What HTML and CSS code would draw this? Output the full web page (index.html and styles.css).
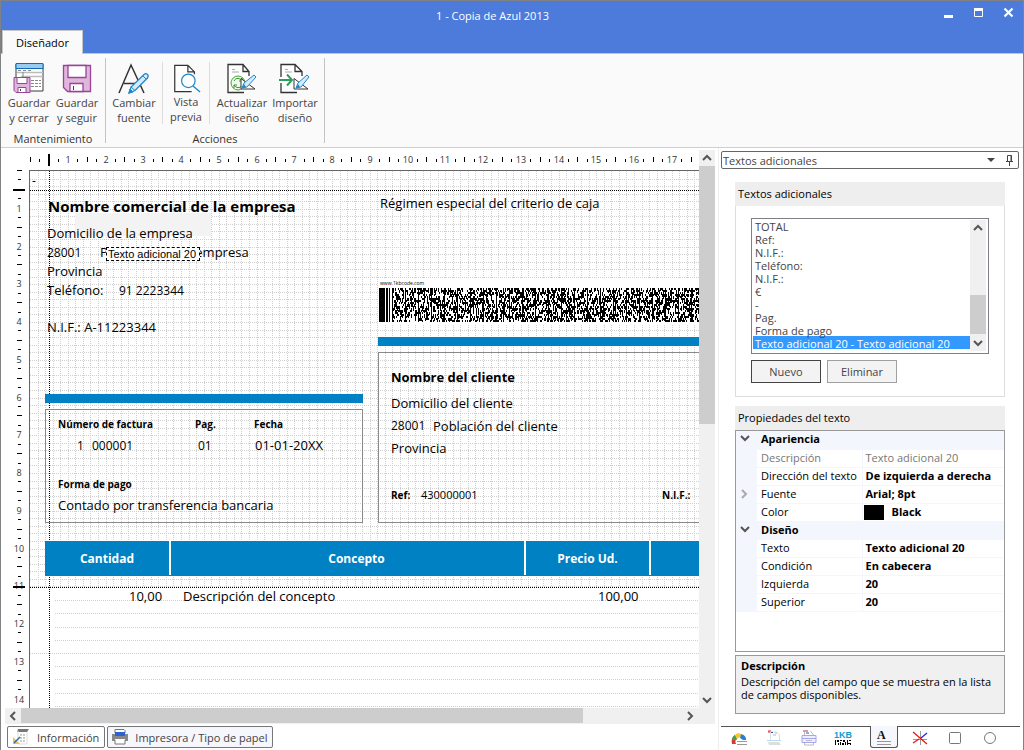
FILE: index.html
```html
<!DOCTYPE html>
<html lang="es">
<head>
<meta charset="utf-8">
<title>1 - Copia de Azul 2013</title>
<link rel="stylesheet" href="styles.css">
</head>
<body>
<div class="window">
  <header class="titlebar">
    <h1 class="title">1 - Copia de Azul 2013</h1>
    <div class="window-buttons">
      <button aria-label="Minimizar"><svg width="11" height="11"><path d="M1 8h9v3H1z" fill="#fff"/></svg></button>
      <button aria-label="Maximizar"><svg width="11" height="11"><path d="M1.500 1.500h8v8h-8z" fill="none" stroke="#fff"/><path d="M1 1h9v3H1z" fill="#fff"/></svg></button>
      <button aria-label="Cerrar"><svg width="11" height="11"><path d="M1.500 1.500l8 8M9.500 1.500l-8 8" stroke="#fff" stroke-width="2.200"/></svg></button>
    </div>
    <button class="ribbon-tab">Diseñador</button>
  </header>

  <nav class="ribbon">
    <section class="ribbon-group save-group">
      <div class="ribbon-tools">
        <button class="tool">
          <svg width="32" height="32" viewBox="0 0 32 32" fill="none"><path d="M3 2h27v27H3z" fill="#fff" stroke="#3b3b3b"/><path d="M3 1.500h27v5H3z" fill="#9ccbf0" stroke="#0f6cb8"/><path d="M4 10.500h26M8 14.500h22" stroke="#bbb" stroke-width="1.500"/><path d="M5 8.500h3m2 0h3m2 0h3M18 18.500h10M18 21.500h10M18 24.500h10" stroke="#888" stroke-dasharray="3 1"/><path d="M10 10v5" stroke="#888"/><path d="M1 15.500h16v15H3l-2-2z" fill="#dfb7dc" stroke="#9a4399"/><path d="M4 15.500h10v6H4z" fill="#fff" stroke="#9a4399"/><path d="M5 25.500h8v5H5z" fill="#fff" stroke="#9a4399"/><path d="M7.500 27v2" stroke="#444"/></svg>
          <span>Guardar<br>y cerrar</span></button>
        <button class="tool">
          <svg width="32" height="32" viewBox="0 0 32 32" fill="none"><path d="M2.500 3.500h27v26H6.500l-4-4z" fill="#dfb7dc" stroke="#9a4399" stroke-width="1.300"/><path d="M7 3.500h18v12H7z" fill="#fff" stroke="#9a4399" stroke-width="1.300"/><path d="M9 21.500h13v8H9z" fill="#fff" stroke="#9a4399" stroke-width="1.300"/><path d="M12.500 24v4" stroke="#444"/></svg>
          <span>Guardar<br>y seguir</span></button>
      </div>
      <h2>Mantenimiento</h2>
    </section>
    <section class="ribbon-group action-group">
      <div class="ribbon-tools">
        <button class="tool">
          <svg width="32" height="32" viewBox="0 0 32 32" fill="none"><path d="M1 31L13 3l13 28M6 21.500h15" stroke="#333" stroke-width="1.500"/><path d="M11 31l2-6L26 12.500c1-1 2.500-1 3.500 0s1 2 0 3.500L17 28.500z" fill="#d7eafa" stroke="#1e88cf" stroke-width="1.300"/><path d="M11 31l4-1-3-3zM13 25l4 3.500M25 14l3 3" stroke="#1e88cf" fill="#1e88cf"/></svg>
          <span>Cambiar<br>fuente</span></button>
        <button class="tool preview">
          <svg width="32" height="32" viewBox="0 0 32 32" fill="none"><path d="M4 2.500h14l7 7v21H4z" fill="#fff"/><path d="M22 30.500H4v-28h14l7 7V12M18 2.500v7h7" stroke="#333" stroke-width="1.300"/><circle cx="18.500" cy="19" r="7.200" fill="#fff" stroke="#1e88cf" stroke-width="1.300"/><path d="M23.500 24.500L31 31" stroke="#1e88cf" stroke-width="1.500"/></svg>
          <span>Vista<br>previa</span></button>
        <button class="tool">
          <svg width="32" height="32" viewBox="0 0 32 32" fill="none"><path d="M2 2.500h15l6 7v21H2z" fill="#fff"/><path d="M23 14V9.500l-6-7H2v28h16M17 2.500v7h6" stroke="#333" stroke-width="1.300"/><path d="M6 7.500h3M6 10h7" stroke="#aaa"/><circle cx="12" cy="21" r="7" fill="#f2faee" stroke="#46a332"/><path d="M8 19c2-4 6-3 8 0m0 4c-2 4-6 3-8 0M16 16v3h-3M8 26v-3h3" stroke="#33952a"/><path d="M15 16.500V27h14z" fill="#fff" stroke="#333"/><path d="M16 26l2-5L28 13l2 2-9 10z" fill="#d7eafa" stroke="#1e88cf"/><path d="M16 26l4-1-2-3z" fill="#1e88cf"/></svg>
          <span>Actualizar<br>diseño</span></button>
        <button class="tool">
          <svg width="32" height="32" viewBox="0 0 32 32" fill="none"><path d="M2 2.500h14l7 7v21H2z" fill="#fff"/><path d="M2 15V2.500h14l7 7V14M16 2.500v7h7M2 21v9.500h16" stroke="#333" stroke-width="1.300"/><path d="M6 7.500h3M6 10h7" stroke="#aaa"/><path d="M0 18h12M8 12.500l5 5.500-5 5.500" stroke="#2f9e5b" stroke-width="2"/><path d="M15 16.500V27h14z" fill="#fff" stroke="#333"/><path d="M17 26l2-5L28 13l2 2-8 10z" fill="#d7eafa" stroke="#1e88cf"/><path d="M17 26l4-1-2-3z" fill="#1e88cf"/></svg>
          <span>Importar<br>diseño</span></button>
      </div>
      <h2>Acciones</h2>
    </section>
  </nav>

  <main class="workspace">
    <section class="editor">
      <svg class="ruler ruler-top" id="ruler-top" aria-hidden="true"></svg>
      <svg class="ruler ruler-left" id="ruler-left" aria-hidden="true"></svg>
      <div class="canvas">
        <svg class="layer" id="grid" aria-hidden="true"></svg>
        <div class="ghost"></div>
        <p class="item dash">-</p>
        <p class="item company">Nombre comercial de la empresa</p>
        <p class="item t13 address">Domicilio de la empresa</p>
        <p class="item zip">28001</p>
        <p class="item t13 town">Población de la empresa</p>
        <p class="item t13 province">Provincia</p>
        <p class="item t13 phone-label">Teléfono:</p>
        <p class="item phone">91 2223344</p>
        <p class="item t13 nif">N.I.F.: A-11223344</p>
        <p class="item t13 regime">Régimen especial del criterio de caja</p>
        <p class="item selected">Texto adicional 20</p>

        <div class="barcode"><small>www.1kbcode.com</small><svg id="barcode" role="img" aria-label="Código 1KB"></svg></div>
        <div class="bar bar-client"></div>
        <div class="bar bar-invoice"></div>
        <div class="box box-invoice"></div>
        <div class="box box-client"></div>

        <p class="item small-bold invoice-label">Número de factura</p>
        <p class="item small-bold page-label">Pag.</p>
        <p class="item small-bold date-label">Fecha</p>
        <p class="item serie">1</p>
        <p class="item invoice">000001</p>
        <p class="item page">01</p>
        <p class="item t13 date">01-01-20XX</p>
        <p class="item small-bold payment-label">Forma de pago</p>
        <p class="item t13 payment">Contado por transferencia bancaria</p>

        <p class="item t13 client">Nombre del cliente</p>
        <p class="item t13 client-address">Domicilio del cliente</p>
        <p class="item client-zip">28001</p>
        <p class="item t13 client-town">Población del cliente</p>
        <p class="item t13 client-province">Provincia</p>
        <p class="item small-bold ref-label">Ref:</p>
        <p class="item ref">430000001</p>
        <p class="item small-bold client-nif">N.I.F.:</p>

        <div class="columns"><span>Cantidad</span><span>Concepto</span><span>Precio Ud.</span><span></span></div>
        <p class="item t13 quantity">10,00</p>
        <p class="item t13 concept">Descripción del concepto</p>
        <p class="item t13 price">100,00</p>
      </div>
      <div class="scroll scroll-v">
        <button aria-label="Subir"><svg width="10" height="10"><path d="M1 7l4-4 4 4" /></svg></button>
        <div class="track"><div class="thumb"></div></div>
        <button aria-label="Bajar"><svg width="10" height="10"><path d="M1 3l4 4 4-4"/></svg></button>
      </div>
      <div class="scroll scroll-h">
        <button aria-label="Izquierda"><svg width="10" height="10"><path d="M7 1L3 5l4 4"/></svg></button>
        <div class="track"><div class="thumb"></div></div>
        <button aria-label="Derecha"><svg width="10" height="10"><path d="M3 1l4 4-4 4"/></svg></button>
      </div>
      <nav class="sheets">
        <button><svg width="18" height="18" fill="none"><path d="M6 1h11l-2 3H5z" fill="#777"/><path d="M6 3v13h9V4" stroke="#ddd"/><path d="M8 7h5M8 10h5M8 13h5" stroke="#999" stroke-dasharray="2 1"/><path d="M1 9l7 7H1z" fill="#f3bd62"/><path d="M2 15l6-6" stroke="#246fae" stroke-width="1.500"/></svg>Información</button>
        <button><svg width="18" height="18" fill="none"><path d="M4 5V1.500h9l1 1V5M4 12v4h10v-4" fill="#fff" stroke="#777"/><path d="M1 6h16v7h-3v-2H4v2H1z" fill="#888"/><path d="M4 4h10v4H4z" fill="#2b62cf"/></svg>Impresora / Tipo de papel</button>
      </nav>
    </section>

    <aside class="dock">
      <header class="dock-title"><h2>Textos adicionales</h2>
        <button aria-label="Opciones"><svg width="9" height="5"><path d="M0 0h8L4 4z" fill="#444"/></svg></button>
        <button aria-label="Fijar"><svg width="9" height="11" fill="none" stroke="#444"><path d="M2.500 6V.5h4V6M6 .5V6M1 6.500h7M4.500 7v4"/></svg></button>
      </header>
      <section class="group">
        <h3 id="texts">Textos adicionales</h3>
        <div class="group-body">
          <div class="listbox">
            <select size="10" aria-labelledby="texts">
              <option>TOTAL</option><option>Ref:</option><option>N.I.F.:</option><option>Teléfono:</option><option>N.I.F.:</option><option>€</option><option>-</option><option>Pag.</option><option>Forma de pago</option><option selected>Texto adicional 20 - Texto adicional 20</option>
            </select>
            <div class="scroll scroll-v">
              <button aria-label="Subir lista"><svg width="10" height="10"><path d="M1 7l4-4 4 4"/></svg></button>
              <div class="track"><div class="thumb"></div></div>
              <button aria-label="Bajar lista"><svg width="10" height="10"><path d="M1 3l4 4 4-4"/></svg></button>
            </div>
          </div>
          <div class="actions"><button class="default">Nuevo</button><button>Eliminar</button></div>
        </div>
      </section>
      <section class="group properties">
        <h3>Propiedades del texto</h3>
        <div class="property-grid">
          <table>
            <colgroup><col class="gutter"><col class="name"><col></colgroup>
            <tr class="category"><td><svg width="10" height="8"><path d="M1 1l4 4 4-4"/></svg></td><th colspan="2">Apariencia</th></tr>
            <tr class="readonly"><td></td><th>Descripción</th><td>Texto adicional 20</td></tr>
            <tr><td></td><th>Dirección del texto</th><td>De izquierda a derecha</td></tr>
            <tr><td><svg class="closed" width="8" height="10"><path d="M2 1l4 4-4 4"/></svg></td><th>Fuente</th><td>Arial; 8pt</td></tr>
            <tr><td></td><th>Color</th><td class="color-cell"><i class="swatch"></i>Black</td></tr>
            <tr class="category"><td><svg width="10" height="8"><path d="M1 1l4 4 4-4"/></svg></td><th colspan="2">Diseño</th></tr>
            <tr><td></td><th>Texto</th><td>Texto adicional 20</td></tr>
            <tr><td></td><th>Condición</th><td>En cabecera</td></tr>
            <tr><td></td><th>Izquierda</th><td>20</td></tr>
            <tr><td></td><th>Superior</th><td>20</td></tr>
          </table>
        </div>
        <div class="help"><strong>Descripción</strong><p>Descripción del campo que se muestra en la lista de campos disponibles.</p></div>
      </section>
      <nav class="dock-tabs">
        <button aria-label="Color"><svg width="16" height="16" fill="none"><path d="M1 14c-1-4 0-7 3-9l2 4c-2 1-2 3-1 5z" fill="#df3438"/><path d="M1 10c0-2 1-4 3-5l2 4-1 1z" fill="#39a84a"/><path d="M4 5c2-2 4-2 6-1L9 8C8 7 7 8 6 9z" fill="#f5c52e"/><path d="M10 4c3 1 5 2 5 6h-3L9 8z" fill="#2d7bd2"/><path d="M6 11.500h10M6 14.500h10" stroke="#999"/></svg></button>
        <button aria-label="Imagen"><svg width="16" height="16" fill="none"><path d="M4.500 2v9M4.500 2h6l3 3v6" stroke="#ddd"/><path d="M2 1h3M3 1v2" stroke="#e02c24"/><path d="M5 2.500h2" stroke="#2455c5"/><path d="M7 5h3M9 3h2" stroke="#bbb"/><path d="M1 10.500h14" stroke="#b3d9f3"/><path d="M2 12h11l2 3H3z" fill="#ddd"/></svg></button>
        <button aria-label="Campos"><svg width="16" height="16" fill="none"><path d="M3.500 2v13h9V5l-3-4" stroke="#bbb"/><path d="M2 1h5" stroke="#e02c24"/><path d="M5 3h3" stroke="#2455c5"/><path d="M1 5.500h14v7H1zM1 8.500h14" fill="#eeeeff" stroke="#a5a5f0"/><path d="M5 10.500h6" stroke="#bbb"/></svg></button>
        <button aria-label="Código 1KB"><svg width="20" height="16"><text x="0" y="8" class="kb">1KB</text><path d="M1 10h1v5H1zM3 10h2v2H3zM4 13h1v2H4zM6 10h2v1H6zM6 12h1v3H6zM8 13h2v2H8zM9 10h2v2H9zM11 12h1v3h-1zM13 10h1v5h-1zM15 10h2v1h-2zM14 13h3v1h-3zM16 14h1v1h-1z"/></svg></button>
        <button class="active" aria-label="Textos adicionales"><svg width="16" height="18" fill="none"><text x="1" y="11" class="letter">A</text><path d="M1 13.500h14M1 16.500h14" stroke="#999"/></svg></button>
        <button aria-label="Líneas"><svg width="16" height="16" fill="none"><path d="M8.500 1v14M1 9.500h14" stroke="#999"/><path d="M1 2l14 12" stroke="#e11" stroke-width="1.200"/><path d="M15 3l-6 5" stroke="#22d" stroke-width="1.200"/><path d="M7 9l-6 4" stroke="#e11" stroke-width="1.200"/></svg></button>
        <button aria-label="Cuadros"><svg width="16" height="16" fill="none"><rect x="2.500" y="2.500" width="11" height="11" rx="1" stroke="#777"/></svg></button>
        <button aria-label="Elipses"><svg width="16" height="16" fill="none"><circle cx="8" cy="8" r="5.500" stroke="#777"/></svg></button>
      </nav>
    </aside>
  </main>
</div>
<script src="script.js"></script>
</body>
</html>
```
FILE: styles.css
```css
* { box-sizing: border-box; }
body { margin: 0; font: 11px/15px "Open Sans", "Noto Sans", sans-serif; color: #444; }
h1, h2, h3, p { margin: 0; font: inherit; }
button { padding: 0; border: 0; background: none; font: inherit; color: inherit; }
svg { display: block; }
.window { display: flex; flex-direction: column; height: 100vh; min-height: 600px; border: 1px solid #808285; border-bottom: 0; background: #fff; }

.titlebar { display: grid; grid-template-columns: 1fr 81px; grid-template-rows: 29px 24px; flex: none; background: linear-gradient(#4c7bdb 52px, #c6c6c6 52px); }
.title { padding-left: 42px; text-align: center; color: #fff; line-height: 29px; }
.window-buttons { display: flex; gap: 19px; align-items: center; padding: 0 0 6px 1px; }
.ribbon-tab { justify-self: start; width: 81px; margin-left: 1px; border: 1px solid #c6c6c6; border-bottom: 0; background: #fafafa; color: #000; height: 24px; }

.ribbon { display: flex; flex: none; height: 94px; padding: 4px 0; background: #fafafa; border-bottom: 1px solid #cfcfcf; }
.ribbon-group { border-right: 1px solid #c4c4c4; color: #444; }
.save-group { width: 105px; padding-left: 4px; }
.action-group { width: 219px; }
.ribbon-tools { display: flex; height: 74px; padding-top: 4px; }
.tool { width: 48px; display: flex; flex-direction: column; align-items: center; justify-content: flex-start; gap: 1px; }
.action-group .tool { width: 56px; }
.action-group .preview { width: 48px; height: 62px; padding-top: 1px; border: 1px solid #ddd; border-width: 0 1px; margin-right: 4px; }
.action-group .tool:last-child { width: 50px; }
.ribbon-group h2 { text-align: center; line-height: 13px; color: #333; }
.save-group h2 { margin-right: 4px; }

.workspace { display: grid; grid-template-columns: 1fr 308px; flex: 1; min-height: 0; }
.editor { display: grid; grid-template-columns: 28px 1fr 16px; grid-template-rows: 22px 1fr 16px 26px; min-width: 0; min-height: 0; }
.ruler { width: 100%; height: 100%; overflow: hidden; font-size: 9px; fill: #333; }
.ruler-top { grid-area: 1 / 1 / 2 / 3; }
.ruler-left { grid-area: 2 / 1 / 3 / 2; min-height: 0; }
.canvas { grid-area: 2 / 2 / 3 / 3; position: relative; overflow: hidden; border: 1px solid #666; border-width: 1px 0 0 1px; color: #000; }
.layer { position: absolute; width: 100%; height: 100%; }
.item { position: absolute; white-space: nowrap; font-size: 12px; line-height: 16px; }
.ghost { position: absolute; left: 45px; top: 42px; width: 136px; height: 23px; background: #f3f3f3; }
.t13 { font-size: 13px; line-height: 14px; }
.small-bold { font-size: 10px; font-weight: 700; }
.dash { left: 2px; top: 2px; }
.company { left: 18px; top: 27px; font-size: 15px; font-weight: 700; }
.address { left: 17px; top: 55px; }
.zip { left: 17px; top: 74px; }
.town { left: 70px; top: 74px; }
.province { left: 17px; top: 93px; }
.phone-label { left: 17px; top: 112px; }
.phone { left: 89px; top: 112px; }
.nif { left: 17px; top: 149px; }
.regime { left: 350px; top: 25px; }
.selected { left: 76px; top: 76px; width: 94px; height: 14px; border: 1px dashed #000; background: #fff; padding-left: 1px; font: 11px/12px "Liberation Sans", Arial, sans-serif; }
.bar { position: absolute; height: 9px; background: #0081c3; }
.bar-client { left: 348px; top: 166px; right: 0; }
.bar-invoice { left: 15px; top: 223px; width: 318px; }
.box { position: absolute; border: 1px solid #8a8a8a; }
.box-invoice { left: 15px; top: 238px; width: 318px; height: 114px; }
.box-client { left: 348px; top: 181px; right: 0; height: 171px; border-right: 0; }
.barcode { position: absolute; left: 348px; top: 107px; right: 0; height: 46px; padding-left: 1px; background: #fff; overflow: hidden; }
.barcode small { display: block; height: 10px; padding-left: 1px; font-size: 5px; line-height: 10px; }
.barcode svg { width: 100%; height: 34px; }
.invoice-label { left: 28px; top: 245px; }
.page-label { left: 165px; top: 245px; }
.date-label { left: 224px; top: 245px; }
.serie { left: 47px; top: 267px; }
.invoice { left: 62px; top: 267px; }
.page { left: 168px; top: 267px; }
.date { left: 225px; top: 267px; }
.payment-label { left: 28px; top: 305px; }
.payment { left: 28px; top: 327px; }
.client { left: 361px; top: 199px; font-weight: 700; }
.client-address { left: 361px; top: 225px; }
.client-zip { left: 361px; top: 247px; }
.client-town { left: 403px; top: 248px; }
.client-province { left: 361px; top: 270px; }
.ref-label { left: 361px; top: 316px; }
.ref { left: 391px; top: 316px; font-size: 11px; }
.client-nif { left: 632px; top: 316px; }
.columns { position: absolute; left: 15px; top: 370px; right: 0; height: 35px; display: grid; grid-template-columns: 124px 353px 123px 1fr; gap: 2px; background: linear-gradient(#fff 34px, #0081c3 34px); color: #fff; font-size: 12px; font-weight: 700; line-height: 35px; text-align: center; }
.columns span { background: #0081c3; }
.columns span:nth-child(2) { padding-left: 18px; }
.quantity { left: 99px; top: 418px; }
.concept { left: 153px; top: 418px; }
.price { left: 568px; top: 418px; }

.scroll { display: flex; background: #f0f0f0; }
.scroll button { flex: none; width: 16px; height: 16px; display: grid; place-items: center; }
.scroll path, .property-grid path { fill: none; stroke: #555; stroke-width: 2; }
.track { flex: 1; display: flex; }
.thumb { background: #cdcdcd; }
.scroll-v { flex-direction: column; }
.scroll-v .track { flex-direction: column; }
.editor > .scroll-v { grid-area: 1 / 3 / 3 / 4; margin-top: 2px; }
.editor > .scroll-v .thumb { height: 49%; }
.scroll-h { grid-area: 3 / 1 / 4 / 4; margin-left: 4px; padding-right: 17px; }
.scroll-h .thumb { width: 85%; height: 15px; }
.sheets { grid-area: 4 / 1 / 5 / 4; display: flex; gap: 2px; padding: 2px 0 2px 6px; }
.sheets button { display: flex; align-items: center; gap: 7px; padding: 0 5px 0 4px; height: 22px; border: 1px solid #777; border-radius: 2px; }
.sheets button + button { gap: 6px; padding: 0 4px 0 3px; background: #f6f6fd; }

.dock { display: flex; flex-direction: column; padding: 3px 2px 2px 2px; border-left: 1px solid #eee; margin-left: 3px; min-height: 0; }
.dock-title { display: flex; align-items: center; gap: 9px; height: 18px; margin: 0 2px 0 0; padding: 0 4px 0 1px; border: 1px solid #666; border-radius: 2px; flex: none; }
.dock-title h2 { flex: 1; }
.group { margin: 13px 16px 0 14px; }
.group h3 { height: 24px; padding-left: 3px; background: #eee; line-height: 24px; color: #000; }
.group-body { padding: 12px 15px 13px; border: 1px solid #ddd; border-top: 0; }
.listbox { display: flex; height: 136px; padding: 0 2px 2px 1px; border: 1px solid #7f8086; }
.listbox select { flex: 1; min-width: 0; height: 131px; padding: 0; margin: 0; border: 0; border-radius: 0; outline: 0; overflow: hidden; font: inherit; line-height: 13px; color: #444; background: #fff; scrollbar-width: none; }
.listbox option { height: 13px; min-height: 0; padding: 0 2px; line-height: 13px; }
.listbox option:checked { background: #3399ff linear-gradient(#3399ff, #3399ff); color: #fff; }
.listbox .scroll { margin-top: 1px; }
.listbox .track { justify-content: flex-end; padding-bottom: 1px; }
.listbox .thumb { height: 40%; }
.actions { display: flex; gap: 6px; margin-top: 6px; }
.actions button { width: 70px; height: 23px; border: 1px solid #a0a0a0; background: #f3f3f3; }
.actions .default { border-color: #444; }
.properties { display: flex; flex-direction: column; flex: 1; min-height: 0; margin-top: 9px; margin-bottom: 12px; }
.property-grid { flex: 1; min-height: 0; overflow: hidden; border: 1px solid #999; }
table { width: 100%; border-collapse: collapse; table-layout: fixed; color: #000; }
.gutter { width: 21px; }
.name { width: 105px; }
td, th { height: 18px; padding: 0 0 1px 3px; border-bottom: 1px solid #f3f6fc; line-height: 16px; text-align: left; font-weight: 400; white-space: nowrap; }
tr td:first-child { padding-left: 4px; background: #f3f6fc; }
th { padding-left: 4px; border-right: 1px solid #f3f6fc; }
td:last-child { font-weight: 700; }
.category th { font-weight: 700; background: #f3f6fc; }
.readonly th, .readonly td:last-child { color: #777; font-weight: 400; }
.property-grid .closed path { stroke: #aaa; }
td.color-cell { padding-left: 1px; }
.swatch { display: block; float: left; width: 20px; height: 15px; margin: 1px 8px 0 0; background: #000; }
.help { height: 59px; margin-top: 3px; padding: 2px 5px; border: 1px solid #999; background: #f0f0f0; color: #000; line-height: 13px; flex: none; }
.help strong { display: block; margin-bottom: 2px; line-height: 15px; }
.dock-tabs { display: flex; align-items: center; height: 22px; flex: none; margin-right: 1px; border-top: 1px solid #555; }
.dock-tabs button { width: 35px; height: 22px; display: grid; place-items: center; }
.dock-tabs .active { width: 28px; margin: -1px 4px 0 9px; border: 1px solid #555; border-top: 0; border-radius: 0 0 3px 3px; background: #f6f6fd; }
.kb { font: 700 9px "Liberation Sans", sans-serif; fill: #1399d6; }
.letter { font: 700 12px "Liberation Serif", serif; fill: #111; }
```
FILE: script.js
```js
const CM = 37.75;
const put = (id, html) => { document.getElementById(id).innerHTML = html; };
const rect = (x, y, w, h, color = '#000') =>
  `<rect x="${Math.round(x)}" y="${Math.round(y)}" width="${w}" height="${h}" fill="${color}"/>`;

let across = '', down = '';
const width = document.getElementById('ruler-top').clientWidth;
const height = document.getElementById('ruler-left').clientHeight;
for (let i = 0; i <= 60; i++) {
  const x = 29 + i * CM, y = i * CM;
  if (x < width - 6) across += i ? `<text x="${Math.round(x)}" y="15" text-anchor="middle">${i}</text>` : rect(x, 9, 1, 5);
  if (y < height - 4) down += i ? `<text x="18" y="${Math.round(y) + 4}" text-anchor="middle">${i}</text>` : rect(16, y, 5, 1);
  for (const q of [0.25, 0.75]) {
    across += rect(x + q * CM, 11, 1, 3);
    down += rect(17, y + q * CM, 3, 1);
  }
  across += rect(x + CM / 2, 9, 1, 5);
  down += rect(16, y + CM / 2, 5, 1);
}
put('ruler-top', across + rect(47, 6, 2, 12));
put('ruler-left', down + rect(12, 19, 12, 2) + rect(12, 416, 12, 2));

const dotted = (x1, y1, x2, y2, color) =>
  `<path d="M${x1} ${y1}L${x2} ${y2}" stroke="${color}" stroke-dasharray="1 1" shape-rendering="crispEdges"/>`;
let grid = '';
for (let k = 1; k < 300; k++) {
  const p = Math.round(k * CM / 5) + 0.5;
  grid += dotted(p, 0, p, 416, '#d0d0d0');
  if (p < 416) grid += dotted(0, p, 2000, p, '#d0d0d0');
}
for (let k = 1; k < 40; k++) {
  const y = Math.round(416 + k * 13.2) + 0.5;
  grid += dotted(k === 5 ? 0 : 25, y, 2000, y, '#d0d0d0');
}
grid += dotted(0, 19.5, 2000, 19.5, '#000') + dotted(0, 416.5, 2000, 416.5, '#000') + dotted(19.5, 0, 19.5, 2000, '#000');
put('grid', grid);

let seed = 7;
const random = () => (seed = (seed * 16807) % 2147483647) / 2147483647;
let cells = 'M0 0h6v34h-6zM7 0h2v34h-2zM10 0h1v34h-1z';
for (let x = 13; x < 800; x++) {
  if ((x - 13) % 13 === 0) { cells += `M${x} 0h1v34h-1z`; continue; }
  for (let y = 0; y < 34; y += 2) {
    if (random() < 0.47) cells += `M${x} ${y}h1v${random() < 0.4 ? 3 : 2}h-1z`;
  }
}
put('barcode', `<path d="${cells}"/>`);
```
